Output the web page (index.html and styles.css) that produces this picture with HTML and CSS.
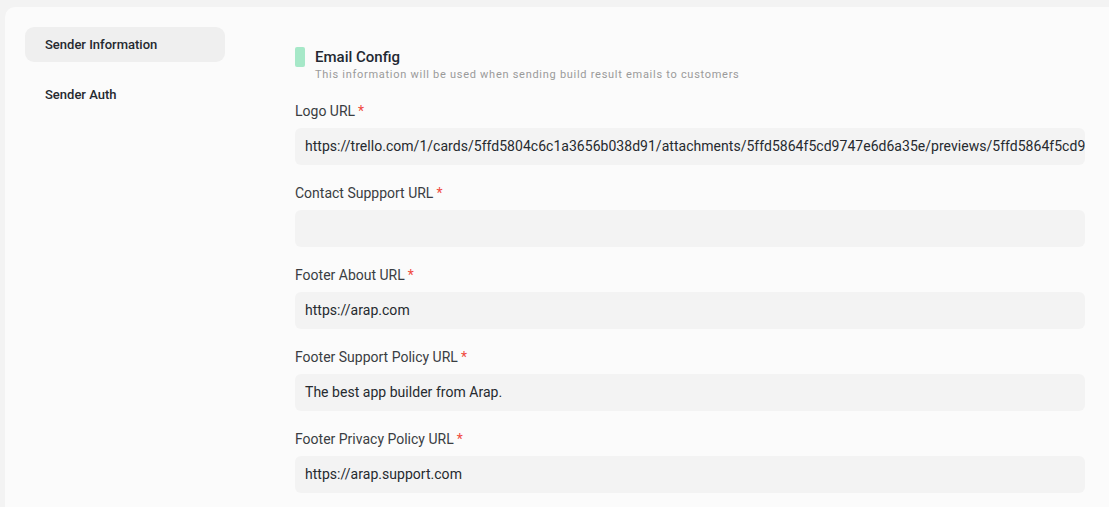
FILE: index.html
```html
<!DOCTYPE html>
<html>
<head>
<meta charset="utf-8">
<link rel="stylesheet" href="styles.css">
</head>
<body>
<div class="card">
  <nav class="sidebar">
    <div class="nav-item active">Sender Information</div>
    <div class="nav-item">Sender Auth</div>
  </nav>
  <main class="main">
    <div class="section-head">
      <span class="bar"></span>
      <div>
        <div class="title">Email Config</div>
        <div class="subtitle">This information will be used when sending build result emails to customers</div>
      </div>
    </div>
    <div class="field">
      <div class="label">Logo URL<span class="req">*</span></div>
      <div class="input">https://trello.com/1/cards/5ffd5804c6c1a3656b038d91/attachments/5ffd5864f5cd9747e6d6a35e/previews/5ffd5864f5cd9747e6d6a361/download/logo.png</div>
    </div>
    <div class="field">
      <div class="label">Contact Suppport URL<span class="req">*</span></div>
      <div class="input"></div>
    </div>
    <div class="field">
      <div class="label">Footer About URL<span class="req">*</span></div>
      <div class="input">https://arap.com</div>
    </div>
    <div class="field">
      <div class="label">Footer Support Policy URL<span class="req">*</span></div>
      <div class="input">The best app builder from Arap.</div>
    </div>
    <div class="field">
      <div class="label">Footer Privacy Policy URL<span class="req">*</span></div>
      <div class="input">https://arap.support.com</div>
    </div>
  </main>
</div>
</body>
</html>
```
FILE: styles.css
```css
html, body {
  margin: 0;
  padding: 0;
  background: #f3f3f3;
  font-family: Roboto, "Liberation Sans", sans-serif;
  overflow: hidden;
}
body {
  padding: 7px 0 0 5px;
  height: 507px;
  box-sizing: border-box;
}
.card {
  background: #fbfbfb;
  border-radius: 10px 0 0 0;
  display: flex;
  height: 600px;
  padding: 20px 24px 0 20px;
}
.sidebar {
  width: 200px;
  flex: none;
  display: flex;
  flex-direction: column;
  gap: 15px;
}
.nav-item {
  height: 35px;
  line-height: 35px;
  padding-left: 20px;
  font-size: 13px;
  font-weight: 500;
  color: #25292f;
  border-radius: 9px;
}
.nav-item.active {
  background: #efefef;
}
.main {
  flex: 1;
  margin-left: 70px;
  min-width: 0;
  padding-top: 20px;
}
.section-head {
  display: flex;
  gap: 10px;
  margin-bottom: 18px;
}
.bar {
  width: 10px;
  height: 20px;
  background: #a6e8c8;
  border-radius: 2px;
  flex: none;
}
.title {
  font-size: 15px;
  font-weight: 500;
  color: #222831;
  line-height: 20px;
}
.subtitle {
  font-size: 11px;
  color: #9a9a9a;
  letter-spacing: 0.72px;
  line-height: 16px;
}
.field {
  margin-bottom: 18px;
}
.label {
  font-size: 14px;
  color: #3a3d42;
  line-height: 20px;
  margin-bottom: 7px;
}
.req {
  color: #f04a3e;
  margin-left: 3px;
}
.input {
  height: 37px;
  line-height: 37px;
  background: #f3f3f3;
  border-radius: 6px;
  padding: 0 10px;
  font-size: 14px;
  letter-spacing: 0.03px;
  color: #262a2f;
  white-space: nowrap;
  overflow: hidden;
}
```
